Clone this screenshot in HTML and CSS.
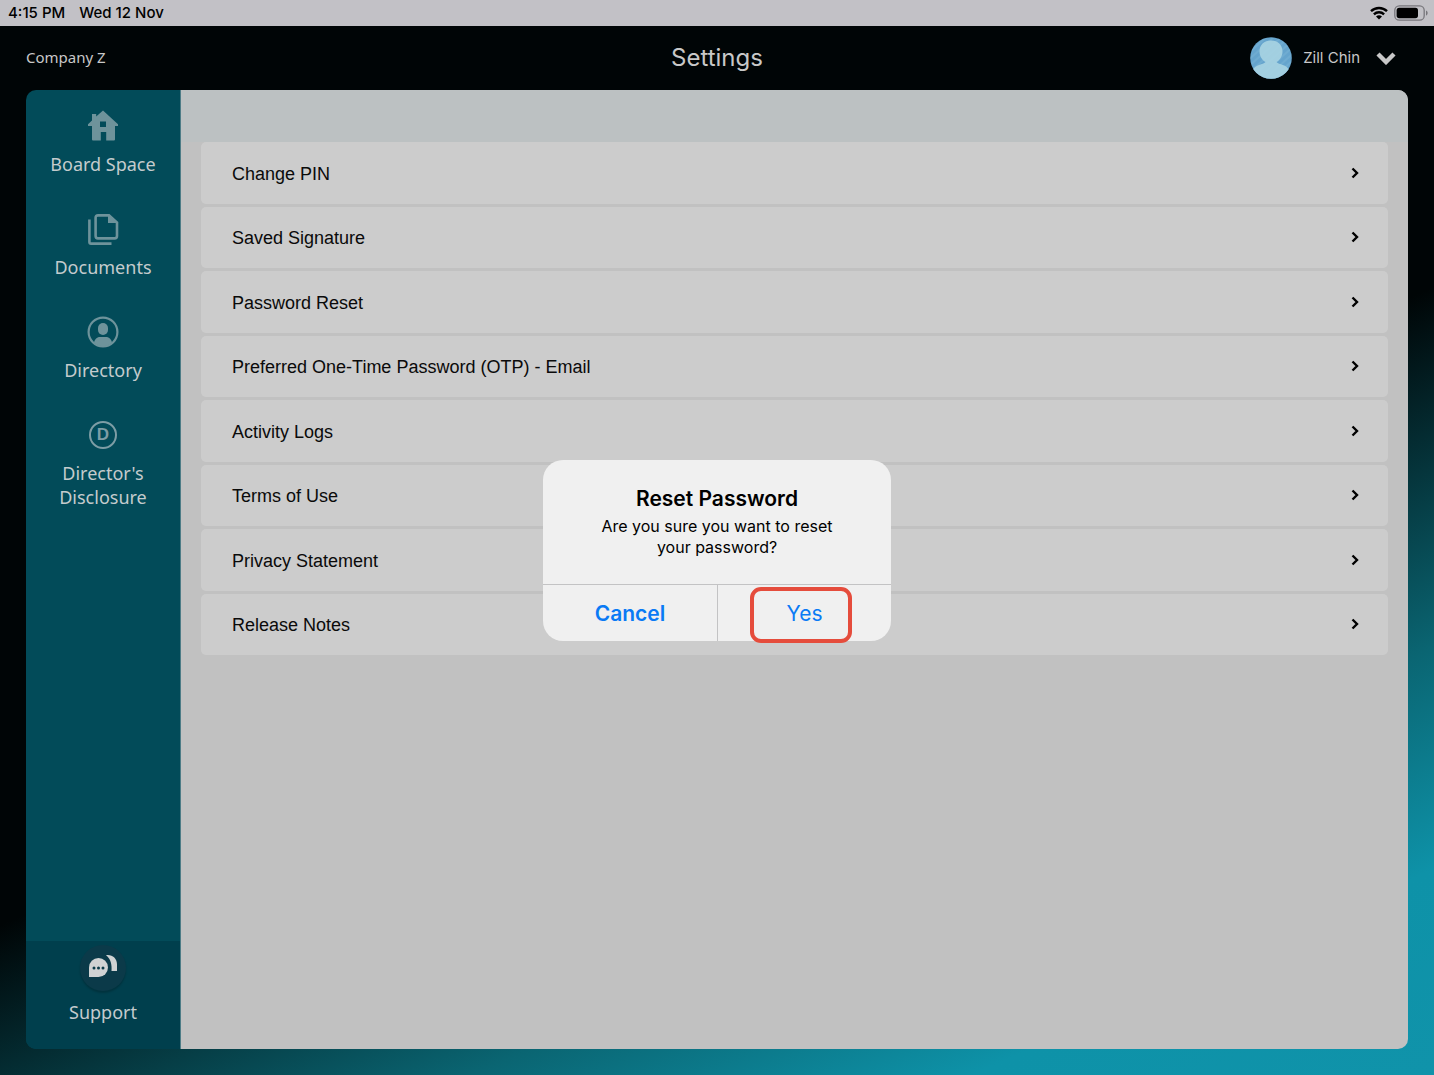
FILE: index.html
```html
<!DOCTYPE html>
<html lang="en">
<head>
    <meta charset="UTF-8">
    <meta name="viewport" content="width=device-width, initial-scale=1.0">
    <title>Settings</title>
    <link rel="stylesheet" href="styles.css">
</head>
<body>
    <!-- Device status bar -->
    <div class="status-bar">
        <span>4:15 PM</span>
        <span>Wed 12 Nov</span>
        <div class="status-icons">
            <svg width="18" height="14" viewBox="0 0 18 14" fill="none" stroke="#000" stroke-width="2.4">
                <path d="M1 5.2a11.5 11.5 0 0 1 16 0"/>
                <path d="M3.9 8.3a7.4 7.4 0 0 1 10.2 0"/>
                <path d="M9 13.6L6 10.6a4.3 4.3 0 0 1 6 0z" fill="#000" stroke="none"/>
            </svg>
            <svg width="34" height="16" viewBox="0 0 34 16">
                <rect x="0.8" y="0.8" width="29.4" height="14.4" rx="4.5" fill="none" stroke="#77767b" stroke-width="1.3"/>
                <rect x="2.6" y="2.8" width="21.4" height="10.4" rx="2.6"/>
                <path d="M32 5.4c2.2.9 2.2 4.3 0 5.2z" fill="#77767b"/>
            </svg>
        </div>
    </div>

    <header class="header">
        <div class="company">Company Z</div>
        <h1 class="title">Settings</h1>
        <button type="button" class="account">
            <svg class="avatar" width="42" height="42" viewBox="0 0 42 42">
                <defs>
                    <clipPath id="avatar-clip"><circle cx="21" cy="21" r="20.8"/></clipPath>
                    <pattern id="strokes" width="5" height="5" patternUnits="userSpaceOnUse" patternTransform="rotate(48)">
                        <path d="M1 0v5" stroke="#a5d3e6" stroke-width="0.8" opacity="0.4"/>
                    </pattern>
                </defs>
                <g clip-path="url(#avatar-clip)">
                    <rect width="42" height="42" fill="#65a4cd"/>
                    <path d="M21 3.5c7 0 11.500 4.500 11.500 11 0 4.500-2.500 8.500-6 10.500 2.500 3 10 2 13.500 9V42H2v-8c3.500-7 11-6 13.500-9-3.500-2-6-6-6-10.500 0-6.500 4.500-11 11.500-11z" fill="#a2cfe0"/>
                    <rect width="42" height="42" fill="url(#strokes)"/>
                </g>
            </svg>
            <span>Zill Chin</span>
            <svg width="20" height="14" viewBox="0 0 20 14" fill="none" stroke="#c8c8c8" stroke-width="4.4">
                <path d="M2 3l8 8 8-8"/>
            </svg>
        </button>
    </header>

    <div class="workspace">
        <nav class="sidebar">
            <div class="menu">
                <a href="#" class="menu-item">
                    <svg width="32" height="32" viewBox="0 0 32 32" fill="#6e939b">
                        <path fill-rule="evenodd" d="M16 .5L31 14.2v1.8h-3v13.5q0 1-1 1h-7.8v-8.5h-5.4v8.5H6q-1 0-1-1V16H1v-1.8l4-3.800V4h4.200v2.600zM13 11.500v5.500h6v-5.500z"/>
                    </svg>
                    <span>Board Space</span>
                </a>
                <a href="#" class="menu-item">
                    <svg width="32" height="32" viewBox="0 0 32 32" fill="none" stroke="#6e939b" stroke-width="2.6">
                        <path d="M11 2.400h11l8 7.200v13.400q0 2.400-2.400 2.400H11q-2.400 0-2.400-2.400V4.800q0-2.400 2.400-2.400z"/>
                        <path d="M21 1.500v8.500h9.500z" fill="#6e939b" stroke="none"/>
                        <path d="M2.400 6.500V29q0 1.600 1.600 1.600h20.500"/>
                    </svg>
                    <span>Documents</span>
                </a>
                <a href="#" class="menu-item">
                    <svg width="32" height="32" viewBox="0 0 32 32" fill="#6e939b">
                        <circle cx="16" cy="16" r="14.4" fill="none" stroke="#6e939b" stroke-width="2.2"/>
                        <rect x="11" y="7" width="10" height="12" rx="5"/>
                        <path d="M7 26.500c1-4 3.500-5.500 6-5.500h6c2.500 0 5 1.500 6 5.500-5 5-13 5-18 0z"/>
                    </svg>
                    <span>Directory</span>
                </a>
                <a href="#" class="menu-item">
                    <span class="letter-box"><span class="letter">D</span></span>
                    <span>Director's Disclosure</span>
                </a>
            </div>
            <a href="#" class="support">
                <span class="chat">
                    <svg width="30" height="24" viewBox="0 0 30 24" fill="#d0d2d3">
                        <path d="M1 23V13.500a9.500 9.500 0 1 1 9.500 9.500z"/>
                        <path d="M18 1.200c6-1 11 3 11 9V17h-5.500c.5-6-.5-12-5.500-15.800z"/>
                        <g fill="#0b3a49">
                            <circle cx="6" cy="14" r="1.500"/>
                            <circle cx="10.500" cy="14" r="1.500"/>
                            <circle cx="15" cy="14" r="1.500"/>
                        </g>
                    </svg>
                </span>
                <span>Support</span>
            </a>
        </nav>

        <main class="content">
            <div class="toolbar"></div>
            <div class="settings">
                <button type="button" class="row"><span>Change PIN</span><svg class="arrow" viewBox="0 0 8 12"><path d="M1.500 1.500L6 6l-4.500 4.500"/></svg></button>
                <button type="button" class="row"><span>Saved Signature</span><svg class="arrow" viewBox="0 0 8 12"><path d="M1.500 1.500L6 6l-4.500 4.500"/></svg></button>
                <button type="button" class="row"><span>Password Reset</span><svg class="arrow" viewBox="0 0 8 12"><path d="M1.500 1.500L6 6l-4.500 4.500"/></svg></button>
                <button type="button" class="row"><span>Preferred One-Time Password (OTP) - Email</span><svg class="arrow" viewBox="0 0 8 12"><path d="M1.500 1.500L6 6l-4.500 4.500"/></svg></button>
                <button type="button" class="row"><span>Activity Logs</span><svg class="arrow" viewBox="0 0 8 12"><path d="M1.500 1.500L6 6l-4.500 4.500"/></svg></button>
                <button type="button" class="row"><span>Terms of Use</span><svg class="arrow" viewBox="0 0 8 12"><path d="M1.500 1.500L6 6l-4.500 4.500"/></svg></button>
                <button type="button" class="row"><span>Privacy Statement</span><svg class="arrow" viewBox="0 0 8 12"><path d="M1.500 1.500L6 6l-4.500 4.500"/></svg></button>
                <button type="button" class="row"><span>Release Notes</span><svg class="arrow" viewBox="0 0 8 12"><path d="M1.500 1.500L6 6l-4.500 4.500"/></svg></button>
            </div>
        </main>
    </div>

    <!-- Confirmation dialog -->
    <div class="overlay">
        <div class="dialog" role="alertdialog" aria-modal="true" aria-labelledby="dialog-title" aria-describedby="dialog-text">
            <div class="dialog-body">
                <h2 id="dialog-title">Reset Password</h2>
                <p id="dialog-text">Are you sure you want to reset your password?</p>
            </div>
            <div class="dialog-buttons">
                <button type="button" class="cancel">Cancel</button>
                <button type="button" class="yes">Yes<span class="marker"></span></button>
            </div>
        </div>
    </div>
</body>
</html>
```
FILE: styles.css
```css
* {
    box-sizing: border-box;
}
body {
    margin: 0;
    min-height: 100vh;
    display: flex;
    flex-direction: column;
    font-family: Inter, "Liberation Sans", sans-serif;
    background: linear-gradient(156deg, #000506 54%, #0a6572 75%, #0e92a8 88%, #1093aa 100%);
}
button {
    font-family: inherit;
    border: none;
    background: none;
    padding: 0;
    cursor: pointer;
}
a {
    color: inherit;
    text-decoration: none;
}

/* Status bar */
.status-bar {
    display: flex;
    align-items: center;
    gap: 14px;
    height: 26px;
    padding: 0 6px 1px 8px;
    background-color: #c2c1c6;
    font-size: 15px;
    font-weight: 500;
    color: #000;
}
.status-icons {
    display: flex;
    align-items: center;
    gap: 6px;
    margin-left: auto;
}

/* Header */
.header {
    display: grid;
    grid-template-columns: 1fr auto 1fr;
    align-items: center;
    height: 64px;
    padding: 0 38px 0 26px;
    color: #c8c8c8;
}
.company {
    padding-bottom: 2px;
    font-family: "Noto Sans", sans-serif;
    font-size: 15px;
}
.title {
    margin: 0;
    padding: 0 0 2px 12px;
    font-size: 24px;
    font-weight: 400;
}
.account {
    display: flex;
    align-items: center;
    justify-self: end;
    gap: 11px;
    font-size: 15px;
    color: #c8c8c8;
}
.account span {
    padding: 0 5px 2px 0;
}

/* Sidebar */
.workspace {
    flex: 1;
    display: flex;
    margin: 0 26px 26px;
    border-radius: 10px;
    overflow: hidden;
}
.sidebar {
    display: flex;
    flex-direction: column;
    width: 155px;
    background-color: #024b59;
    border-right: 1px solid #4d7c86;
    font-family: "Noto Sans", sans-serif;
    font-size: 18px;
    line-height: 24px;
    text-align: center;
    color: #c4cbcd;
}
.menu {
    flex: 1;
    display: flex;
    flex-direction: column;
    gap: 37px;
    padding: 20px 24px;
}
.menu-item {
    display: flex;
    flex-direction: column;
    align-items: center;
    gap: 10px;
}
.letter-box {
    display: flex;
    align-items: center;
    height: 32px;
}
.letter {
    width: 28px;
    height: 28px;
    border: 2px solid #7d9da5;
    border-radius: 50%;
    font-family: "Liberation Sans", sans-serif;
    font-size: 17px;
    font-weight: bold;
    color: #7d9da5;
}
.support {
    display: flex;
    flex-direction: column;
    align-items: center;
    gap: 9px;
    padding: 4px 0 25px;
    background-color: #003f4d;
}
.chat {
    display: flex;
    align-items: center;
    justify-content: center;
    width: 46px;
    height: 46px;
    padding-bottom: 4px;
    border-radius: 50%;
    background-color: #0b3a49;
    box-shadow: 0 2px 2px rgba(0, 0, 0, 0.2);
}

/* Settings list */
.content {
    flex: 1;
    background-color: #c1c1c1;
}
.toolbar {
    height: 52px;
    background-color: #bcc1c2;
}
.settings {
    display: grid;
    grid-auto-rows: 1fr;
    gap: 3px;
    min-height: 513px;
    padding: 0 20px;
}
.row {
    display: flex;
    align-items: center;
    justify-content: space-between;
    padding: 0 29px 0 31px;
    border-radius: 5px;
    background-color: #cccccc;
    font-family: "Liberation Sans", sans-serif;
    font-size: 18px;
    text-align: left;
    color: #0a0a0a;
}
.row span {
    padding-top: 3px;
}
.arrow {
    width: 8px;
    height: 12px;
    fill: none;
    stroke: #000;
    stroke-width: 2.4;
}

/* Dialog */
.overlay {
    position: fixed;
    inset: 26px 0 0;
    display: grid;
    place-items: center;
}
.dialog {
    width: 348px;
    border-radius: 20px;
    background-color: #f0f0f0;
}
.dialog-body {
    padding: 25px 40px 26px;
    text-align: center;
    color: #000;
}
.dialog-body h2 {
    margin: 0 0 3px;
    font-size: 21px;
    font-weight: 600;
    line-height: 28px;
}
.dialog-body p {
    margin: 0;
    font-size: 16px;
    line-height: 21px;
}
.dialog-buttons {
    display: grid;
    grid-template-columns: 1fr 1fr;
    border-top: 1px solid #c3c3c4;
}
.dialog-buttons button {
    height: 56px;
    font-size: 21px;
    color: #0a7af5;
}
.dialog-buttons .cancel {
    font-weight: 600;
}
.dialog-buttons .yes {
    position: relative;
    border-left: 1px solid #c3c3c4;
}
/* Red frame around the Yes button */
.marker {
    position: absolute;
    inset: 2px 39px -2px 32px;
    border: 4px solid #e54c3c;
    border-radius: 11px;
}
```
